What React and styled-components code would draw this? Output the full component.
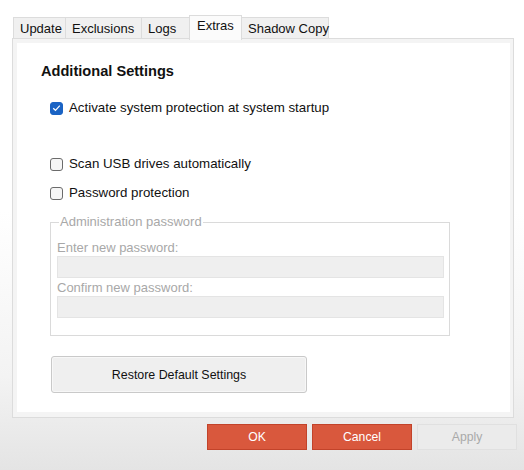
import React from "react";
import styled, { createGlobalStyle } from "styled-components";

const Global = createGlobalStyle`
  html, body { margin: 0; padding: 0; }
  body {
    width: 524px;
    height: 470px;
    overflow: hidden;
    background: linear-gradient(to bottom, #ffffff 0%, #ffffff 45%, #f3f3f3 80%, #e4e4e4 100%);
    font-family: "Liberation Sans", Arial, sans-serif;
    font-size: 13px;
    color: #111;
  }
`;

const Window = styled.div`
  padding: 15px 0 0 12px;
  display: flex;
  flex-direction: column;
`;

const TabStrip = styled.div`
  display: flex;
  align-items: flex-end;
  height: 24px;
  padding-left: 2px;
  position: relative;
  z-index: 2;
`;

const Tab = styled.div`
  box-sizing: border-box;
  width: ${(p) => p.$w}px;
  height: ${(p) => (p.$active ? 25 : 22)}px;
  margin-bottom: ${(p) => (p.$active ? -1 : 0)}px;
  padding: ${(p) => (p.$active ? "2px 0 0 7px" : "3px 0 0 6px")};
  border: 1px solid #dcdcdc;
  border-bottom: ${(p) => (p.$active ? "none" : "1px solid #dcdcdc")};
  margin-left: -1px;
  background: ${(p) => (p.$active ? "#fbfbfb" : "#f0f0f0")};
  color: #111;
  line-height: 16px;
  white-space: nowrap;
`;

const Panel = styled.div`
  box-sizing: border-box;
  width: 502px;
  height: 380px;
  border: 1px solid #dcdcdc;
  background: #f4f4f4;
  padding: 4px 3px 5px 4px;
  margin-top: -1px;
`;

const Inner = styled.div`
  background: #ffffff;
  height: 100%;
  padding: 0 0 0 24px;
  box-sizing: border-box;
  display: flex;
  flex-direction: column;
`;

const Title = styled.div`
  font-weight: bold;
  font-size: 14.6px;
  line-height: 17px;
  margin-top: 20px;
  color: #111;
`;

const CheckRow = styled.label`
  display: flex;
  align-items: center;
  gap: 6px;
  height: 16px;
  margin-left: 9px;
  margin-top: ${(p) => p.$mt}px;
  line-height: 16px;
  font-size: 13.3px;
  color: #111;
`;

const Box = styled.span`
  box-sizing: border-box;
  width: 13px;
  height: 13px;
  border-radius: 3px;
  border: 1px solid ${(p) => (p.$checked ? "#1a63c4" : "#6b6b6b")};
  background: ${(p) => (p.$checked ? "#1a63c4" : "#f6f6f6")};
  display: flex;
  align-items: center;
  justify-content: center;
  flex: none;
`;

const Fieldset = styled.fieldset`
  box-sizing: border-box;
  width: 400px;
  height: 122px;
  margin: 13px 0 0 9px;
  padding: 0 5px 0 6px;
  border: 1px solid #dadada;
  display: flex;
  flex-direction: column;
`;

const Legend = styled.legend`
  color: #a8a8a8;
  padding: 0 1px;
  margin-left: 2px;
  line-height: 16px;
`;

const FieldLabel = styled.div`
  color: #a8a8a8;
  line-height: 16px;
  margin-top: ${(p) => p.$mt}px;
`;

const Input = styled.div`
  box-sizing: border-box;
  height: 22px;
  margin-top: ${(p) => p.$mt}px;
  background: #efefef;
  border: 1px solid #e4e4e4;
`;

const RestoreButton = styled.button`
  box-sizing: border-box;
  width: 256px;
  height: 37px;
  margin: 20px 0 0 10px;
  border: 1px solid #c9c9c9;
  border-radius: 3px;
  background: #efefef;
  box-shadow: inset 0 0 0 1px #f7f7f7;
  font-family: "Liberation Sans", Arial, sans-serif;
  font-size: 12.4px;
  color: #111;
  padding: 0;
`;

const ButtonBar = styled.div`
  display: flex;
  gap: 5px;
  margin: 6px 0 0 195px;
`;

const DialogButton = styled.button`
  box-sizing: border-box;
  width: 100px;
  height: 26px;
  padding: 0;
  font-family: "Liberation Sans", Arial, sans-serif;
  font-size: 12.2px;
  border: 1px solid ${(p) => (p.$disabled ? "#e0e0e0" : "#c2432a")};
  background: ${(p) => (p.$disabled ? "#ebebeb" : "#d9583d")};
  color: ${(p) => (p.$disabled ? "#a9a9a9" : "#ffffff")};
`;

const tabs = [
  { label: "Update", w: 53 },
  { label: "Exclusions", w: 77 },
  { label: "Logs", w: 49 },
  { label: "Extras", w: 53, active: true },
  { label: "Shadow Copy", w: 88 },
];

const Check = () => (
  <svg width="9" height="8" viewBox="0 0 9 8">
    <path d="M1.2 4.2 L3.5 6.3 L7.8 1.6" fill="none" stroke="#ffffff" strokeWidth="1.2" />
  </svg>
);

export default function App() {
  return (
    <>
      <Global />
      <Window>
        <TabStrip>
          {tabs.map((t) => (
            <Tab key={t.label} $w={t.w} $active={t.active}>
              {t.label}
            </Tab>
          ))}
        </TabStrip>
        <Panel>
          <Inner>
            <Title>Additional Settings</Title>
            <CheckRow $mt={20}>
              <Box $checked>
                <Check />
              </Box>
              Activate system protection at system startup
            </CheckRow>
            <CheckRow $mt={40}>
              <Box />
              Scan USB drives automatically
            </CheckRow>
            <CheckRow $mt={13}>
              <Box />
              Password protection
            </CheckRow>
            <Fieldset>
              <Legend>Administration password</Legend>
              <FieldLabel $mt={10}>Enter new password:</FieldLabel>
              <Input $mt={0} />
              <FieldLabel $mt={2}>Confirm new password:</FieldLabel>
              <Input $mt={0} />
            </Fieldset>
            <RestoreButton>Restore Default Settings</RestoreButton>
          </Inner>
        </Panel>
        <ButtonBar>
          <DialogButton>OK</DialogButton>
          <DialogButton>Cancel</DialogButton>
          <DialogButton $disabled>Apply</DialogButton>
        </ButtonBar>
      </Window>
    </>
  );
}
